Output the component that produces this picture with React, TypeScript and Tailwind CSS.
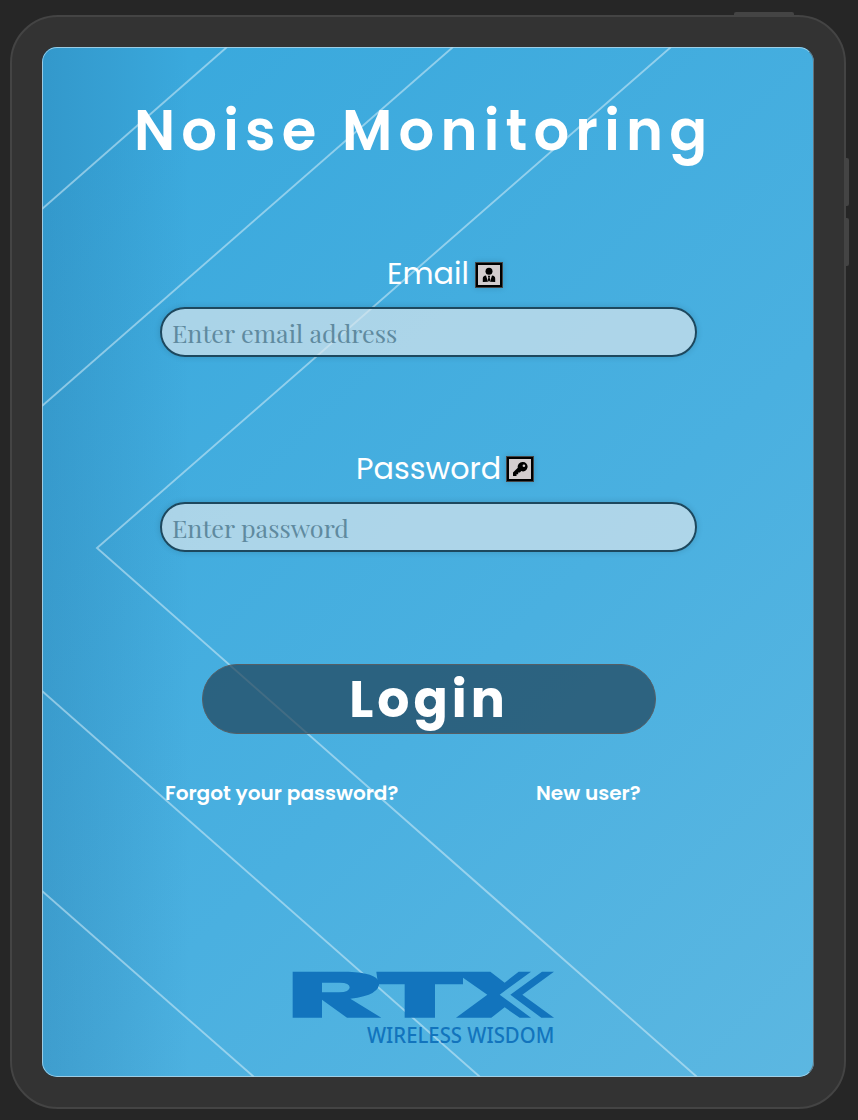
import type { ReactNode } from "react";

function Backdrop() {
  return (
    <svg className="absolute inset-0 h-full w-full" viewBox="42 47 772 1030" preserveAspectRatio="none" fill="none" aria-hidden="true">
      <defs>
        <linearGradient id="sky" gradientUnits="userSpaceOnUse" x1="60" y1="180" x2="880" y2="1020">
          <stop offset="0" stopColor="#3aa9dd" />
          <stop offset="0.55" stopColor="#4ab0e0" />
          <stop offset="1" stopColor="#5cb7e1" />
        </linearGradient>
        <linearGradient id="shade" gradientUnits="userSpaceOnUse" x1="42" y1="0" x2="190" y2="0">
          <stop offset="0" stopColor="#1e6696" stopOpacity="0.25" />
          <stop offset="0.5" stopColor="#1e6696" stopOpacity="0.13" />
          <stop offset="1" stopColor="#1e6696" stopOpacity="0" />
        </linearGradient>
      </defs>
      <rect x="42" y="47" width="773" height="1030" fill="url(#sky)" />
      <rect x="42" y="47" width="773" height="1030" fill="url(#shade)" />
      <g stroke="#d3edf8" strokeOpacity="0.55" strokeWidth="1.9">
        <path d="M227 47 42 209" />
        <path d="M453 47 42 406" />
        <path d="M671 47 97 548 697 1077" />
        <path d="M42 691 480 1077" />
        <path d="M42 891 254 1077" />
      </g>
    </svg>
  );
}

function IconBox({ children }: { children: ReactNode }) {
  return (
    <span className="flex h-[26px] w-7 items-center justify-center border-[3px] border-black bg-[#d3cdce] shadow-[0_0_6px_rgba(0,0,0,0.15)] outline-1 -outline-offset-1 outline-[#444]">
      {children}
    </span>
  );
}

function PersonIcon() {
  return (
    <svg width="14" height="16" viewBox="0 0 14 16" aria-hidden="true">
      <circle cx="7" cy="4.3" r="3.5" />
      <path d="M.8 15V11.5Q.8 9 4 8.6L6 14.8ZM13.2 15V11.5Q13.2 9 10 8.6L8 14.8ZM5.8 8.8H8.2L7.6 10.4 8.2 13 7 15 5.8 13 6.4 10.4Z" />
    </svg>
  );
}

function KeyIcon() {
  return (
    <svg width="16" height="16" viewBox="0 0 16 16" aria-hidden="true">
      <path fillRule="evenodd" d="M10.5 1a4.7 4.7 0 0 0-4.7 5.7L1 11.5V15h3.5v-1.7h1.7v-1.7h1.7l1.4-1.5A4.7 4.7 0 1 0 10.5 1Zm1.4 2.4a1.3 1.3 0 1 1 0 2.6 1.3 1.3 0 0 1 0-2.6Z" />
    </svg>
  );
}

const inputClass =
  "block h-[50px] w-[537px] rounded-full border-2 border-[#1d485e] bg-[#d9e6ed]/70 pl-[10px] font-['Playfair_Display','Liberation_Serif',serif] text-[25.2px] text-[#5f8a9f] shadow-[0_0_6px_rgba(0,0,0,0.15)] outline-none placeholder:text-[#5f8a9f]";

function Logo() {
  return (
    <svg className="h-[76px] w-[264px] overflow-visible" viewBox="35 32 792 228" fill="#1274bd" role="img" aria-label="RTX Wireless Wisdom">
      <path fillRule="evenodd" d="M37 34H205Q286 37 296 64Q302 104 210 115L303 172H200L125 118V172H37ZM125 67V96H176Q208 96 208 81Q208 67 178 67Z" />
      <path d="M288 34H630L673 67 715 34H752L658 103 752 172H718L673 141 633 172H527L621 103 548 52V72H464V172H373V72H293Z" />
      <path d="M785 34H821L726 103 821 172H783L690 103Z" />
      <text x="260" y="247" textLength="562" lengthAdjust="spacingAndGlyphs" className="font-['Noto_Sans',sans-serif] text-[63px] font-medium">
        WIRELESS WISDOM
      </text>
    </svg>
  );
}

export default function App() {
  return (
    <div className="relative h-[1120px] w-[858px] overflow-hidden bg-[#262626] pt-[15px] pl-[10px] font-['Poppins','Inter',sans-serif]">
      <span className="absolute top-[12px] left-[734px] h-1 w-[60px] rounded-t-xs bg-[#444]" />
      <span className="absolute top-[158px] left-[846px] h-12 w-[3px] rounded-r-xs bg-[#444]" />
      <span className="absolute top-[218px] left-[846px] h-12 w-[3px] rounded-r-xs bg-[#444]" />
      <div className="h-[1094px] w-[836px] rounded-[48px] border-2 border-[#444] bg-[#333] p-[30px]">
        <main className="relative h-[1030px] w-[772px] overflow-hidden rounded-[15px] text-white">
          <Backdrop />
          <div className="pointer-events-none absolute inset-0 z-10 rounded-[15px] border border-[#b5d8e9]/80 border-r-[#65727a]" />
          <div className="relative flex h-full flex-col">
            <h1 className="mt-[48px] ml-[92px] h-[72px] text-[56px] leading-[72px] font-semibold tracking-[6.2px] whitespace-nowrap">Noise Monitoring</h1>
            <section className="mt-[88px] ml-[118px] w-[538px]">
              <label htmlFor="email" className="ml-[227px] flex h-[40px] items-center text-[30.2px] font-normal whitespace-nowrap">
                <span className="-mt-[3px] w-[88px]">Email</span>
                <IconBox><PersonIcon /></IconBox>
              </label>
              <input id="email" type="email" placeholder="Enter email address" className={`${inputClass} mt-[12px]`} />
            </section>
            <section className="mt-[92px] ml-[118px] w-[538px]">
              <label htmlFor="password" className="ml-[196px] flex h-[40px] items-center text-[30.2px] font-normal whitespace-nowrap">
                <span className="-mt-[1px] w-[150px]">Password</span>
                <IconBox><KeyIcon /></IconBox>
              </label>
              <input id="password" type="password" placeholder="Enter password" className={`${inputClass} mt-[13px]`} />
            </section>
            <button className="mt-[112px] ml-[160px] h-[70px] w-[454px] rounded-full border border-[#555e65] bg-[#1f4157]/70 pt-[1px] text-[50.5px] leading-[68px] font-bold tracking-[4px]">
              Login
            </button>
            <nav className="mt-[43px] ml-[123px] flex h-[32px] items-center text-[20.1px] font-semibold whitespace-nowrap">
              <a href="#forgot" className="w-[371px]">Forgot your password?</a>
              <a href="#signup">New user?</a>
            </nav>
            <div className="mt-[162px] ml-[250px]">
              <Logo />
            </div>
          </div>
        </main>
      </div>
    </div>
  );
}
